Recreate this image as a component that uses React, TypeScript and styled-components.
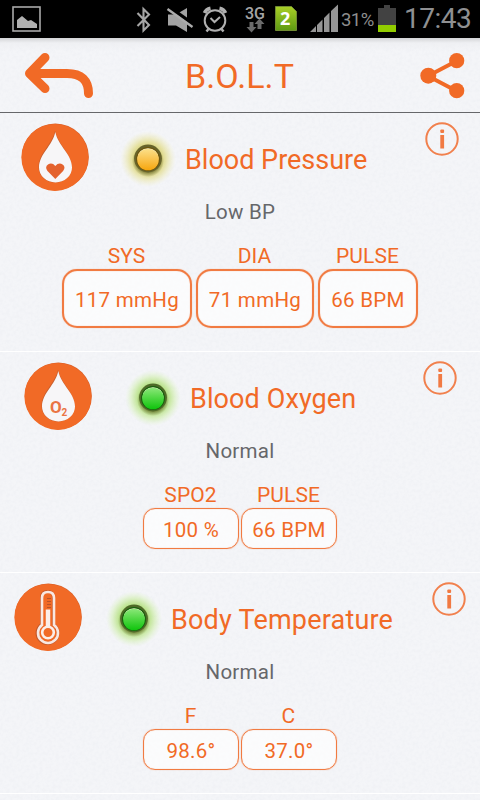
import React from 'react';
import styled, { createGlobalStyle } from 'styled-components';

const ORANGE = '#f16a26';

const grain =
  "url(\"data:image/svg+xml,%3Csvg xmlns='http://www.w3.org/2000/svg' width='160' height='160'%3E%3Cfilter id='n'%3E%3CfeTurbulence type='fractalNoise' baseFrequency='0.3' numOctaves='2' stitchTiles='stitch'/%3E%3CfeColorMatrix values='0 0 0 0 0.45 0 0 0 0 0.5 0 0 0 0 0.6 0.12 0 0 0 -0.045'/%3E%3C/filter%3E%3Crect width='160' height='160' filter='url(%23n)'/%3E%3C/svg%3E\")";

const GlobalStyle = createGlobalStyle`
  * { box-sizing: border-box; }
  body { margin: 0; background: #f2f3f6; overflow: hidden; }
`;

const Screen = styled.div`
  width: 480px;
  height: 800px;
  overflow: hidden;
  display: flex;
  flex-direction: column;
  background: #f4f5f8 ${grain};
  font-family: Roboto, sans-serif;
  color: ${ORANGE};
`;

const StatusBar = styled.div`
  height: 38px;
  flex: none;
  display: flex;
  background: #000;
`;

const StatusIcons = styled.svg`
  display: block;
  flex: none;
`;

const Battery = styled.span`
  width: 37px;
  font-size: 18.5px;
  line-height: 40px;
  letter-spacing: -0.55px;
  color: #8e8e8e;
  white-space: nowrap;
`;

const Clock = styled.span`
  font-size: 28px;
  line-height: 37px;
  letter-spacing: -0.5px;
  color: #8f9092;
  white-space: nowrap;
`;

const Header = styled.header`
  height: 75px;
  flex: none;
  display: flex;
  align-items: center;
  padding: 2px 14px 0 23px;
  border-bottom: 1px solid #66676a;
  background: linear-gradient(#d3d4d6 0, rgba(236, 237, 240, 0.6) 5px, rgba(243, 244, 247, 0) 14px);
`;

const AppTitle = styled.h1`
  margin: 0 auto 0 90px;
  font-size: 34px;
  line-height: 40px;
  font-weight: 400;
  letter-spacing: 0.1px;
`;

const IconButton = styled.button`
  padding: 0;
  border: 0;
  background: none;
  display: flex;
  svg { display: block; }
`;

const Section = styled.section<{ $height: number }>`
  height: ${p => p.$height}px;
  flex: none;
  display: flex;
  flex-direction: column;
  align-items: center;
  border-bottom: 1px solid #fff;
`;

const SectionHead = styled.div<{ $left: number; $right: number }>`
  width: 100%;
  height: 84px;
  display: flex;
  align-items: flex-start;
  padding: 8px ${p => p.$right}px 0 ${p => p.$left}px;
`;

const Led = styled.svg<{ $gap: number }>`
  margin: 6px 0 0 ${p => p.$gap}px;
  flex: none;
`;

const Title = styled.h2<{ $spacing: number }>`
  margin: 23px 0 0 5px;
  font-size: 27px;
  line-height: 32px;
  font-weight: 400;
  letter-spacing: ${p => p.$spacing}px;
  white-space: nowrap;
`;

const InfoButton = styled(IconButton)`
  margin-left: auto;
`;

const Status = styled.p`
  margin: 3px 0 0;
  height: 24px;
  font-size: 20.5px;
  line-height: 24px;
  letter-spacing: 0.25px;
  color: #66676a;
`;

const Readings = styled.div<{ $gap: number }>`
  display: flex;
  gap: ${p => p.$gap}px;
  margin-top: 20px;
`;

const Reading = styled.div<{ $width: number }>`
  width: ${p => p.$width}px;
  display: flex;
  flex-direction: column;
  align-items: center;
`;

const Label = styled.span`
  font-size: 21px;
  line-height: 24px;
  height: 25px;
  letter-spacing: 0.1px;
  transform: translateX(-0.5px);
`;

const Value = styled.div<{ $tall?: boolean }>`
  width: 100%;
  height: ${p => (p.$tall ? 59 : 41)}px;
  display: flex;
  align-items: center;
  justify-content: center;
  padding-top: ${p => (p.$tall ? 3 : 2)}px;
  border: ${p => (p.$tall ? 2 : 1.5)}px solid #f17b42;
  border-radius: ${p => (p.$tall ? 15 : 12)}px;
  background: rgba(255, 255, 255, 0.65);
  box-shadow: 0 0 1px rgba(241, 106, 38, 0.6), inset 0 0 1px rgba(241, 106, 38, 0.6);
  font-size: 20.5px;
  letter-spacing: 0.3px;
  white-space: nowrap;
`;

const StatusGlyphs = () => (
  <StatusIcons width="341" height="38" viewBox="0 0 341 38">
    <defs>
      <linearGradient id="sim" x1="0" y1="0" x2="0" y2="1">
        <stop offset="0" stopColor="#a9cf27" />
        <stop offset="1" stopColor="#5d9a12" />
      </linearGradient>
    </defs>
    <rect x="13" y="7" width="27" height="24" fill="none" stroke="#a9a9a9" strokeWidth="1.6" />
    <path d="M17 28V20l5-4 6 5 3-1 6 4v4z" fill="#b1b1b1" />
    <path d="M137.500 13l11.500 12-5.500 5.500V9l5.500 5.500-11.500 11.500" fill="none" stroke="#a6a6a6" strokeWidth="2.100" />
    <path d="M168 14.500h8l11-6.500v24l-11-6.500h-8z" fill="#a3a3a3" />
    <path d="M168.500 6.500l25 18" stroke="#000" strokeWidth="3.500" />
    <path d="M167.500 9l25 18" stroke="#adadad" strokeWidth="2.400" />
    <g fill="none" stroke="#b0b0b0">
      <circle cx="215" cy="20.500" r="10.300" strokeWidth="2" />
      <path d="M210.500 18l4 4 5.500-5" strokeWidth="2" />
      <path d="M208.500 29l-2 2.500M221.500 29l2 2.500" strokeWidth="2.500" />
      <path d="M204.500 13q1.500-4 6-4.800M225.500 13q-1.500-4-6-4.800" strokeWidth="3.600" />
    </g>
    <text x="245" y="18.500" fontFamily="Roboto, sans-serif" fontSize="17" fontWeight="500" textLength="20" lengthAdjust="spacingAndGlyphs" fill="#a5a5a5">3G</text>
    <path d="M249.500 22h4v5h3l-5 5.500-5-5.500h3z" fill="#6b6b6b" />
    <path d="M257.500 29v-5h-3l5-5.500 5 5.500h-3v5z" fill="#6b6b6b" />
    <path d="M275.500 6.500h16l5 5v19h-21z" fill="url(#sim)" stroke="#718b32" />
    <text x="280" y="25" fontFamily="Open Sans, sans-serif" fontSize="18" fontWeight="700" fill="#fff">2</text>
    <path d="M310 32l6-6v6zM317 32v-7l5.500-5.500V32zM324 32V18l5.500-5.500V32zM331 32V11l7-6.500V32z" fill="#969696" />
  </StatusIcons>
);

const BatteryGlyph = () => (
  <StatusIcons width="26" height="38" viewBox="0 0 26 38">
    <path d="M6 5h6v3h6v17H0V8h6z" fill="#424242" />
    <rect y="25" width="18" height="7" fill="#92cc00" />
  </StatusIcons>
);

const BackGlyph = () => (
  <svg width="72" height="50" viewBox="23 51 72 50" fill="none" stroke={ORANGE} strokeLinecap="round" strokeLinejoin="round">
    <path d="M45 57.500L29.500 73.500 45 88.500" strokeWidth="9" />
    <path d="M31 73.500h36q21.500 0 21.500 20" strokeWidth="9" />
  </svg>
);

const ShareGlyph = () => (
  <svg width="46" height="48" viewBox="420 52 46 48">
    <path d="M456.500 61L428 76l28.500 15" fill="none" stroke={ORANGE} strokeWidth="4" />
    <g fill={ORANGE}>
      <circle cx="456.700" cy="60.700" r="7.600" />
      <circle cx="428.300" cy="75.700" r="8" />
      <circle cx="456.700" cy="90.700" r="7.600" />
    </g>
  </svg>
);

const InfoGlyph = () => (
  <svg width="36" height="36" viewBox="0 0 36 36">
    <circle cx="18" cy="18" r="15.700" fill="none" stroke="#f1804d" strokeWidth="2" />
    <rect x="16.300" y="8.500" width="3.800" height="3.500" rx="1" fill="#f17a43" />
    <rect x="16.300" y="14" width="3.800" height="13.500" fill="#f17a43" />
  </svg>
);

type Kind = 'heart' | 'oxygen' | 'thermo';

const VitalIcon = ({ kind }: { kind: Kind }) => (
  <svg width="70" height="70" viewBox="0 0 70 70">
    <circle cx="35.300" cy="35.900" r="33.500" fill="#d95f28" />
    <circle cx="34.900" cy="36.400" r="33.500" fill={ORANGE} />
    {kind !== 'thermo' && (
      <>
        <path d="M35 9.500C38 24 51.500 32 51.500 46A16.500 15.500 0 0 1 18.500 46C18.500 32 32 24 35 9.500z" fill="#c9602f" />
        <path d="M35.300 11C38 25 52 33 52 46.500A16.500 15 0 0 1 19 46.500C19 33 32.500 25 35.300 11z" fill="#f7f6f8" />
      </>
    )}
    {kind === 'heart' && (
      <path d="M35.300 58L27.500 50q-3-4 .5-6.500 4-2.500 7.300 1.500 3.500-4 7.300-1.500 3.500 2.500.5 6.500z" fill="#e4622e" />
    )}
    {kind === 'oxygen' && (
      <g fontFamily="Roboto, sans-serif" fontWeight="700" fill="#ea7444">
        <text x="27" y="53" fontSize="17">O</text>
        <text x="38.500" y="55.500" fontSize="10">2</text>
      </g>
    )}
    {kind === 'thermo' && (
      <g fill="none" transform="translate(0 0.500)">
        <path d="M28.500 43V16q0-6 6-6t6 6v27a10.500 10.500 0 1 1-12 0z" stroke="#c55a2c" strokeWidth="3" />
        <path d="M29 43.500V16.500q0-6 6-6t6 6v27a10 10 0 1 1-12 0z" stroke="#f8e8e2" strokeWidth="2.600" />
        <path d="M35 28v18" stroke="#fbeee9" strokeWidth="4.500" />
        <circle cx="35" cy="51" r="5.800" fill={ORANGE} stroke="#fbeee9" strokeWidth="2.600" />
        <path d="M34 17h4M34 20h4M34 23h4M34 26h4" stroke="#b9532a" strokeWidth="1.100" />
      </g>
    )}
  </svg>
);

const StatusLed = ({ tone, gap }: { tone: 'amber' | 'green'; gap: number }) => {
  const amber = tone === 'amber';
  return (
    <Led $gap={gap} width="64" height="64" viewBox="0 0 64 64">
      <defs>
        <radialGradient id={`glow-${tone}`}>
          <stop offset="0.400" stopColor={amber ? '#cdc552' : '#97d552'} stopOpacity="0.850" />
          <stop offset="0.620" stopColor={amber ? '#ddd56c' : '#aee070'} stopOpacity="0.600" />
          <stop offset="0.820" stopColor={amber ? '#e6df80' : '#bdec82'} stopOpacity="0.260" />
          <stop offset="1" stopColor={amber ? '#eeeaa8' : '#d2f2aa'} stopOpacity="0" />
        </radialGradient>
        <radialGradient id={`shade-${tone}`}>
          <stop offset="0.650" stopColor="#4d4e12" stopOpacity="0.700" />
          <stop offset="1" stopColor="#4d4e12" stopOpacity="0" />
        </radialGradient>
        <linearGradient id={`bulb-${tone}`} x1="0" y1="0" x2="0" y2="1">
          <stop offset="0" stopColor={amber ? '#fbe08a' : '#8be779'} />
          <stop offset="0.450" stopColor={amber ? '#fac653' : '#52d845'} />
          <stop offset="1" stopColor={amber ? '#f6a60d' : '#0fc40d'} />
        </linearGradient>
      </defs>
      <circle cx="32" cy="32" r="28" fill={`url(#glow-${tone})`} />
      <circle cx="32" cy="34" r="16" fill={`url(#shade-${tone})`} />
      <circle cx="32" cy="31.500" r="13.900" fill={amber ? '#67632b' : '#4e6a28'} />
      <circle cx="32" cy="32" r="12" fill={amber ? '#6d560c' : '#17600c'} />
      <ellipse cx="32" cy="31" rx="10.500" ry="9.800" fill="#f3f1d0" />
      <circle cx="32" cy="32.500" r="10.800" fill={`url(#bulb-${tone})`} />
    </Led>
  );
};

interface Vital {
  name: string;
  kind: Kind;
  tone: 'amber' | 'green';
  status: string;
  height: number;
  left: number;
  ledGap: number;
  right: number;
  spacing: number;
  tall?: boolean;
  readings: { label: string; value: string; width: number }[];
}

const vitals: Vital[] = [
  {
    name: 'Blood Pressure', kind: 'heart', tone: 'amber', status: 'Low BP',
    height: 239, left: 20, ledGap: 26, right: 20, spacing: 0, tall: true,
    readings: [
      { label: 'SYS', value: '117 mmHg', width: 130 },
      { label: 'DIA', value: '71 mmHg', width: 118 },
      { label: 'PULSE', value: '66 BPM', width: 100 },
    ],
  },
  {
    name: 'Blood Oxygen', kind: 'oxygen', tone: 'green', status: 'Normal',
    height: 221, left: 23, ledGap: 28, right: 22, spacing: 0.1,
    readings: [
      { label: 'SPO2', value: '100 %', width: 96 },
      { label: 'PULSE', value: '66 BPM', width: 96 },
    ],
  },
  {
    name: 'Body Temperature', kind: 'thermo', tone: 'green', status: 'Normal',
    height: 221, left: 13, ledGap: 19, right: 13, spacing: 0.2,
    readings: [
      { label: 'F', value: '98.6°', width: 96 },
      { label: 'C', value: '37.0°', width: 96 },
    ],
  },
];

export default function App() {
  return (
    <Screen>
      <GlobalStyle />
      <StatusBar>
        <StatusGlyphs />
        <Battery>31%</Battery>
        <BatteryGlyph />
        <Clock>17:43</Clock>
      </StatusBar>
      <Header>
        <IconButton aria-label="Back"><BackGlyph /></IconButton>
        <AppTitle>B.O.L.T</AppTitle>
        <IconButton aria-label="Share"><ShareGlyph /></IconButton>
      </Header>
      {vitals.map(v => (
        <Section key={v.name} $height={v.height}>
          <SectionHead $left={v.left} $right={v.right}>
            <VitalIcon kind={v.kind} />
            <StatusLed tone={v.tone} gap={v.ledGap} />
            <Title $spacing={v.spacing}>{v.name}</Title>
            <InfoButton aria-label={`About ${v.name}`}><InfoGlyph /></InfoButton>
          </SectionHead>
          <Status>{v.status}</Status>
          <Readings $gap={v.tall ? 4 : 2}>
            {v.readings.map(r => (
              <Reading key={r.label} $width={r.width}>
                <Label>{r.label}</Label>
                <Value $tall={v.tall}>{r.value}</Value>
              </Reading>
            ))}
          </Readings>
        </Section>
      ))}
    </Screen>
  );
}
